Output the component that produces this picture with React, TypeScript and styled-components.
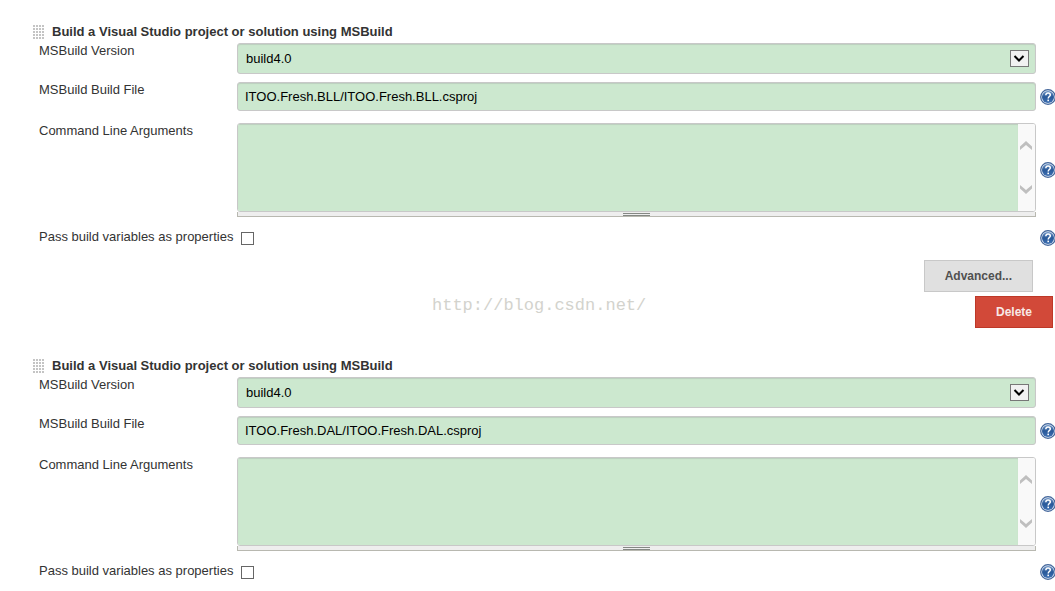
import React, { useId } from "react";
import styled, { createGlobalStyle } from "styled-components";

const GlobalStyle = createGlobalStyle`
  *, *::before, *::after { box-sizing: border-box; }
  body {
    margin: 0;
    background: #fff;
    color: #333;
    font: 13px/16px "Liberation Sans", Arial, Helvetica, sans-serif;
    overflow-x: hidden;
  }
  button, input, select, textarea { font: inherit; }
`;

const Page = styled.main`
  position: relative;
  padding-top: 23px;
`;

const Step = styled.section`
  display: flex;
  flex-direction: column;
`;

const StepHeader = styled.header`
  display: flex;
  align-items: center;
  gap: 7px;
  height: 20px;
  padding: 0 0 2px 33px;
`;

const Title = styled.h2`
  margin: 0;
  font-size: 13px;
  line-height: 16px;
  font-weight: bold;
`;

const Row = styled.div<{ $gap?: number }>`
  display: grid;
  grid-template-columns: 198px minmax(0, 1fr) 15px;
  padding-left: 39px;
  margin-bottom: ${(p) => p.$gap ?? 0}px;
`;

const Label = styled.label`
  white-space: nowrap;
`;

const Control = styled.div`
  position: relative;
  margin-right: 4px;
`;

const Select = styled.select`
  display: block;
  appearance: none;
  width: 100%;
  height: 31px;
  padding: 0 30px 0 8px;
  border: 1px solid #c8c8c8;
  border-radius: 3px;
  background: #cce8cf;
  box-shadow: inset 0 1px 1px #bccfbe;
  color: #000;
`;

const SelectArrow = styled.svg`
  position: absolute;
  top: 7px;
  right: 7px;
  pointer-events: none;
`;

const TextInput = styled.input`
  display: block;
  width: 100%;
  height: 29px;
  padding: 0 7px 1px;
  border: 1px solid #c8c8c8;
  border-radius: 3px;
  background: #cce8cf;
  box-shadow: inset 0 1px 1px #bccfbe;
  color: #000;
`;

const AreaFrame = styled.div`
  display: flex;
  height: 89px;
  border: 1px solid #c8c8c8;
  border-radius: 3px;
  overflow: hidden;
`;

const TextArea = styled.textarea`
  flex: 1;
  min-width: 0;
  padding: 5px;
  border: 0;
  resize: none;
  overflow: hidden;
  background: #cce8cf;
  box-shadow: inset 0 1px 1px #bccfbe;
  color: #000;
`;

const ScrollTrack = styled.div`
  display: flex;
  flex-direction: column;
  justify-content: space-between;
  width: 17px;
  padding: 17px 2px;
  background: #f9f9f9;
`;

const ResizeBar = styled.div`
  display: flex;
  justify-content: center;
  height: 5px;
  border: 1px solid #b8b8b0;
  border-top: 0;
  background: #eee;
`;

const Grip = styled.span`
  width: 27px;
  height: 3px;
  margin-top: 1px;
  border: solid #848884;
  border-width: 1px 0;
`;

const HelpLink = styled.a`
  display: block;
  align-self: center;
  height: 16px;
  overflow: hidden;
`;

const CheckRow = styled(Row)`
  padding-top: 12px;
`;

const Checkbox = styled.input`
  display: block;
  appearance: none;
  width: 13px;
  height: 13px;
  margin: 3px 0 2px 4px;
  border: 1px solid #666;
  background: #fff;
  &:checked { background: #4b758b; }
`;

const Actions = styled.div`
  display: flex;
  flex-direction: column;
  align-items: flex-end;
  gap: 4px;
  padding: 13px 2px 29px 0;
`;

const Button = styled.button<{ $danger?: boolean }>`
  height: 32px;
  margin-right: ${(p) => (p.$danger ? 0 : 20)}px;
  padding: 0 20px;
  border: 1px solid ${(p) => (p.$danger ? "#bd3828" : "#c8c8c8")};
  background: ${(p) => (p.$danger ? "#d24939" : "#e0e0e0")};
  color: ${(p) => (p.$danger ? "#f8e8e6" : "#505050")};
  font-size: 12px;
  font-weight: bold;
`;

const Watermark = styled.span`
  position: absolute;
  top: 296px;
  left: 432px;
  color: #d3d3cd;
  font: 17px/20px "Liberation Mono", monospace;
  pointer-events: none;
`;

const DragHandle = () => (
  <svg width="12" height="14" viewBox="0 0 12 14" aria-hidden="true">
    {[0, 3, 6, 9, 12].map((y) =>
      [0, 3, 6, 9].map((x) => (
        <rect key={`${x}-${y}`} x={x} y={y} width="2" height="2" fill="#c4c4c4" />
      ))
    )}
  </svg>
);

const Help = () => {
  const id = useId();
  return (
    <HelpLink href="#help" aria-label="Help">
      <svg width="16" height="16" viewBox="0 0 16 16">
        <defs>
          <linearGradient id={id} x1="0" y1="0" x2="0" y2="1">
            <stop offset="0" stopColor="#6e94c5" />
            <stop offset="0.5" stopColor="#295999" />
            <stop offset="1" stopColor="#3e70b3" />
          </linearGradient>
        </defs>
        <circle cx="8" cy="8" r="7.3" fill="#dfe8f4" stroke="#42659a" strokeWidth="1.2" />
        <circle cx="8" cy="8" r="6" fill={`url(#${id})`} />
        <path
          d="M5.8 6.2C5.9 4.7 6.8 4 8.1 4c1.4 0 2.2.8 2.2 1.9 0 1.6-2.1 1.7-2.1 3.5"
          fill="none"
          stroke="#fff"
          strokeWidth="1.5"
        />
        <rect x="7.4" y="10.6" width="1.6" height="1.6" fill="#fff" />
      </svg>
    </HelpLink>
  );
};

const Chevron = ({ down }: { down?: boolean }) => (
  <svg width="12" height="9" viewBox="0 0 12 9" aria-hidden="true">
    <path
      d={down ? "M0 0L6 5L12 0V3.6L6 9L0 3.6Z" : "M0 9L6 4L12 9V5.4L6 0L0 5.4Z"}
      fill="#bfbfbf"
    />
  </svg>
);

const BuildStep = ({ file, children }: { file: string; children?: React.ReactNode }) => {
  const id = useId();
  return (
    <Step>
      <StepHeader>
        <DragHandle />
        <Title>Build a Visual Studio project or solution using MSBuild</Title>
      </StepHeader>
      <Row $gap={8}>
        <Label htmlFor={`${id}-version`}>MSBuild Version</Label>
        <Control>
          <Select id={`${id}-version`} defaultValue="build4.0">
            <option>build4.0</option>
          </Select>
          <SelectArrow width="19" height="17" viewBox="0 0 19 17" aria-hidden="true">
            <rect x="0.5" y="0.5" width="18" height="16" fill="#f1f1f1" stroke="#777" />
            <path d="M4.5 6L9 10.5L13.5 6" fill="none" stroke="#000" strokeWidth="2" />
          </SelectArrow>
        </Control>
      </Row>
      <Row $gap={12}>
        <Label htmlFor={`${id}-file`}>MSBuild Build File</Label>
        <Control>
          <TextInput id={`${id}-file`} type="text" defaultValue={file} />
        </Control>
        <Help />
      </Row>
      <Row>
        <Label htmlFor={`${id}-args`}>Command Line Arguments</Label>
        <Control>
          <AreaFrame>
            <TextArea id={`${id}-args`} />
            <ScrollTrack>
              <Chevron />
              <Chevron down />
            </ScrollTrack>
          </AreaFrame>
          <ResizeBar>
            <Grip />
          </ResizeBar>
        </Control>
        <Help />
      </Row>
      <CheckRow>
        <Label htmlFor={`${id}-pass`}>Pass build variables as properties</Label>
        <Control>
          <Checkbox id={`${id}-pass`} type="checkbox" />
        </Control>
        <Help />
      </CheckRow>
      {children}
    </Step>
  );
};

export default function App() {
  return (
    <>
      <GlobalStyle />
      <Page>
        <BuildStep file="ITOO.Fresh.BLL/ITOO.Fresh.BLL.csproj">
          <Actions>
            <Button type="button">Advanced...</Button>
            <Button type="button" $danger>Delete</Button>
          </Actions>
        </BuildStep>
        <BuildStep file="ITOO.Fresh.DAL/ITOO.Fresh.DAL.csproj" />
        <Watermark>http://blog.csdn.net/</Watermark>
      </Page>
    </>
  );
}
